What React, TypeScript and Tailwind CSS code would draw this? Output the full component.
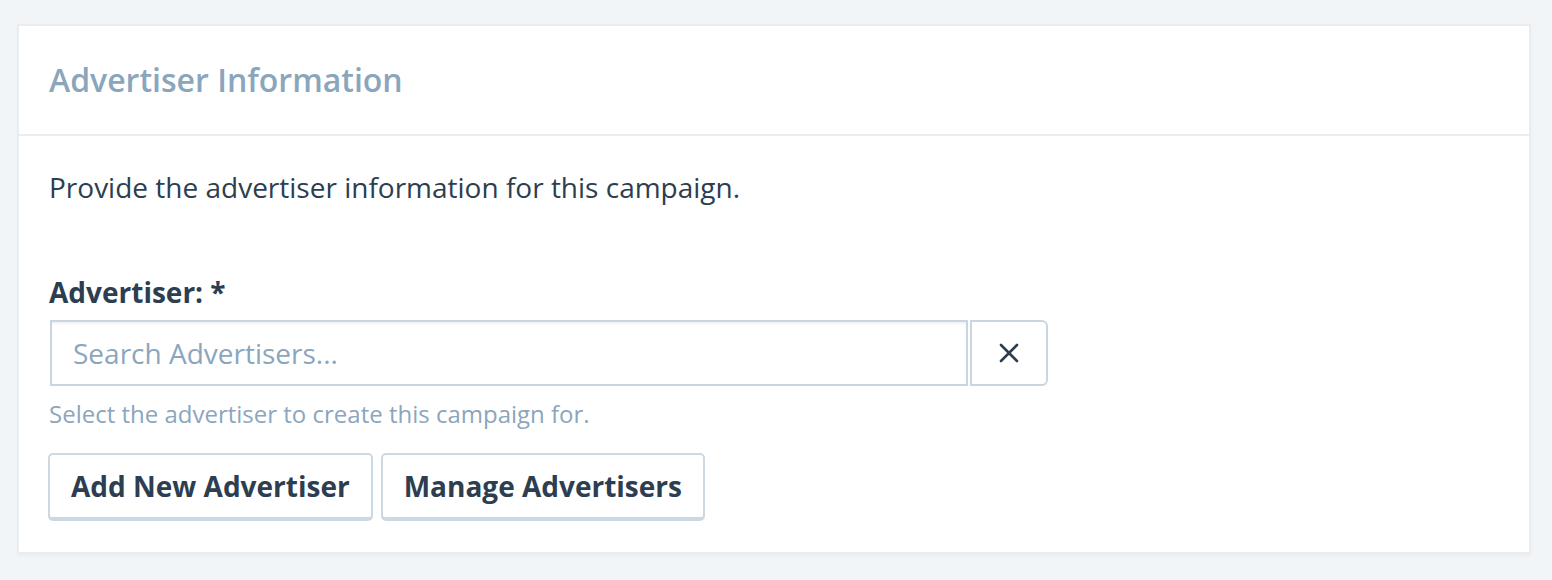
const App = () => {
  return (
    <div className="min-h-[580px] bg-[#f1f5f8] pt-[24px] pl-[17px] pr-[21px] pb-[26px] font-['Open_Sans',sans-serif]">
      <section className="bg-white border-2 border-[#e8edf2] shadow-[0_2px_4px_rgba(0,0,0,0.03)]">
        <div className="h-[110px] flex items-center px-[30px] border-b-2 border-[#e8edf2]">
          <h2 className="text-[32px] font-semibold text-[#89a6bd]">Advertiser Information</h2>
        </div>

        <div className="px-[30px] pt-[32px] pb-[31px]">
          <p className="text-[28px] leading-[38px] text-[#2c3e50]">
            Provide the advertiser information for this campaign.
          </p>

          <label className="block mt-[67px] text-[28px] leading-[38px] font-bold text-[#2c3e50]">
            Advertiser: *
          </label>

          <div className="flex mt-[9px]">
            <input
              className="w-[918px] h-[66px] ml-[1px] border-2 border-[#c9d6e1] shadow-[inset_0_2px_2px_rgba(0,0,0,0.05)] px-[21px] text-[28px] text-[#2c3e50] placeholder:text-[#8ba6bc] outline-none"
              placeholder="Search Advertisers..."
            />
            <button className="w-[78px] h-[66px] ml-[2px] border-2 border-[#c9d6e1] rounded-r-[6px] flex items-center justify-center text-[#2c3e50]">
              <svg width="20" height="20" viewBox="0 0 20 20" fill="none" stroke="currentColor" strokeWidth="2.6" strokeLinecap="round">
                <path d="M2 2L18 18M18 2L2 18" />
              </svg>
            </button>
          </div>

          <p className="mt-[12px] text-[24px] leading-[32px] text-[#8ba6bc]">
            Select the advertiser to create this campaign for.
          </p>

          <div className="flex gap-[8px] mt-[23px] -ml-[1px]">
            <button className="h-[68px] px-[21px] border-2 border-b-[4px] border-[#ccd8e2] rounded-[5px] text-[28px] font-bold text-[#2c3e50]">
              Add New Advertiser
            </button>
            <button className="h-[68px] px-[21px] border-2 border-b-[4px] border-[#ccd8e2] rounded-[5px] text-[28px] font-bold text-[#2c3e50]">
              Manage Advertisers
            </button>
          </div>
        </div>
      </section>
    </div>
  );
};

export default App;
